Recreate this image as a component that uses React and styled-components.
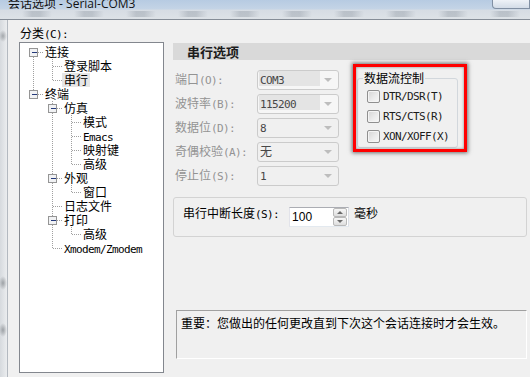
import React from 'react';
import styled, { createGlobalStyle } from 'styled-components';

const GlobalStyle = createGlobalStyle`
  html, body {
    margin: 0;
    padding: 0;
  }
  body {
    width: 530px;
    height: 377px;
    overflow: hidden;
    background: #f0f0f0;
    color: #000;
    font-family: "Noto Sans CJK SC", "Noto Sans CJK JP", sans-serif;
    font-size: 12px;
  }
`;

// SimSun-like half width latin runs
const Ascii = styled.span`
  font-family: "DejaVu Sans Mono", "Liberation Mono", monospace;
  font-size: 11px;
  letter-spacing: -0.62px;
`;

const Window = styled.div`
  width: 530px;
  height: 377px;
  display: flex;
  flex-direction: column;
  overflow: hidden;
`;

const TitleBar = styled.div`
  flex: none;
  height: 19px;
  display: flex;
  justify-content: space-between;
  align-items: flex-start;
  padding-left: 8px;
  overflow: hidden;
  border-bottom: 1px solid #858d97;
  background:
    repeating-linear-gradient(90deg,
      rgba(110, 120, 132, 0) 0px,
      rgba(110, 120, 132, 0) 22px,
      rgba(110, 120, 132, 0.28) 32px,
      rgba(110, 120, 132, 0.28) 40px,
      rgba(110, 120, 132, 0) 52px) 0 11px / 100% 6px no-repeat,
    linear-gradient(to bottom, #b7cbe2 0px, #c4d4e6 9px, #d6dce3 10px, #dde2e7 19px);
`;

const TitleText = styled.span`
  margin-top: -4px;
  line-height: 16px;
  font-family: "Open Sans", "Noto Sans CJK SC", sans-serif;
  font-size: 12px;
  color: #111;
`;

const CaptionButton = styled.span`
  width: 36px;
  height: 8px;
  border: 1px solid #8190a3;
  border-top: none;
  border-radius: 0 0 0 4px;
  background: linear-gradient(to bottom, #eef2f7, #d3dce7);
`;

const Body = styled.div`
  flex: 1;
  display: flex;
  min-height: 0;
`;

const FrameEdge = styled.div`
  flex: none;
  width: 7px;
  border-right: 1px solid #b3b9c0;
  background:
    radial-gradient(ellipse 4px 6px at 3px 16px, rgba(90, 95, 100, 0.45), transparent),
    radial-gradient(ellipse 4px 7px at 3px 263px, rgba(90, 95, 100, 0.5), transparent),
    radial-gradient(ellipse 4px 7px at 3px 310px, rgba(90, 95, 100, 0.5), transparent),
    linear-gradient(90deg, #d6dade, #ebedef);
`;

const Client = styled.div`
  flex: 1;
  display: flex;
  background: #f0f0f0;
`;

const TreeColumn = styled.div`
  flex: none;
  width: 145px;
  padding: 6px 0 0 11px;
  display: flex;
  flex-direction: column;
`;

const CaptionLabel = styled.div`
  height: 14px;
  line-height: 14px;
  margin: 0 0 2px 1px;
`;

const TreeBox = styled.div`
  box-sizing: border-box;
  height: 331px;
  border: 1px solid #83878e;
  background: #fff;
  padding-top: 2px;
`;

const TreeRow = styled.div`
  display: flex;
  height: 14px;
  align-items: center;
`;

const TreeLabel = styled.span`
  display: inline-block;
  height: 14px;
  line-height: 14px;
  white-space: nowrap;
  padding: 0 2px;
  margin-left: -1px;
  background: ${(p) => (p.$selected ? '#e6e6e6' : 'transparent')};
`;

const Panel = styled.div`
  flex: 1;
  min-width: 0;
  display: flex;
  flex-direction: column;
  padding: 23px 3px 0 9px;
`;

const SectionHeader = styled.div`
  height: 17px;
  margin-right: -3px;
  padding-left: 14px;
  background: #d9d9d9;
  line-height: 17px;
  font-size: 13px;
  font-weight: bold;
  color: #1c1c1c;
`;

const FormArea = styled.div`
  display: flex;
  align-items: flex-start;
  margin-top: 10px;
`;

const Fields = styled.div`
  display: grid;
  grid-template-columns: 82px 82px;
  grid-auto-rows: 20px;
  row-gap: 4px;
  align-items: center;
  padding-left: 2px;
`;

const FieldName = styled.span`
  line-height: 14px;
  color: #939393;
  white-space: nowrap;
`;

const Combo = styled.div`
  box-sizing: border-box;
  height: 20px;
  display: flex;
  align-items: flex-start;
  border: 1px solid #cbcbcb;
  border-radius: 3px;
  background: ${(p) => (p.$filled ? '#f6f6f6' : '#f0f0f0')};
  padding-left: 1px;
`;

const ComboValue = styled.span`
  width: ${(p) => (p.$filled ? '60px' : 'auto')};
  height: 15px;
  padding-left: 1px;
  line-height: 16px;
  background: ${(p) => (p.$filled ? '#e4e4e4' : 'transparent')};
  color: #474747;
`;

const ComboArrow = styled.span`
  margin: 7px 6px 0 auto;
  width: 0;
  height: 0;
  border-left: 4px solid transparent;
  border-right: 4px solid transparent;
  border-top: 4px solid #bdbdbd;
`;

const Highlighted = styled.div`
  position: relative;
  margin: 1px 0 0 18px;
`;

const RedMark = styled.div`
  position: absolute;
  left: -4px;
  top: -7px;
  width: 114px;
  height: 88px;
  box-sizing: border-box;
  border: 3px solid #ff0000;
  box-shadow: 0 0 4px 1px rgba(0, 0, 0, 0.55), inset 0 0 3px rgba(0, 0, 0, 0.45);
  pointer-events: none;
`;

const GroupBox = styled.fieldset`
  box-sizing: border-box;
  width: 101px;
  margin: 0;
  padding: 1px 0 1px 5px;
  border: 1px solid #d2d7dc;
  border-radius: 3px;
`;

const GroupTitle = styled.legend`
  padding: 0 1px;
  line-height: 14px;
  font-size: 12px;
`;

const CheckRow = styled.label`
  display: flex;
  align-items: center;
  height: 20px;
  padding-left: 4px;
  color: #1a1a1a;
`;

const CheckBox = styled.span`
  flex: none;
  box-sizing: border-box;
  width: 13px;
  height: 13px;
  border: 1px solid #8f8f8f;
  border-radius: 2px;
  background: linear-gradient(135deg, #d4d4d4 0%, #ebebeb 55%, #f7f7f7 100%);
  box-shadow: inset 0 0 0 1px #f4f4f4;
  margin-right: 3px;
`;

const SpinGroup = styled.div`
  box-sizing: border-box;
  height: 40px;
  margin-top: 11px;
  display: flex;
  align-items: flex-start;
  padding: 8px 0 0 9px;
  border: 1px solid #d3d3d3;
  border-radius: 3px;
`;

const SpinLabel = styled.span`
  line-height: 14px;
  white-space: nowrap;
`;

const SpinField = styled.div`
  box-sizing: border-box;
  width: 60px;
  height: 20px;
  margin: 1px 5px 0 10px;
  display: flex;
  border: 1px solid;
  border-color: #abadb3 #dbdfe6 #e3e9ef #e2e3ea;
  background: #fff;
`;

const SpinValue = styled.span`
  flex: 1;
  padding-left: 2px;
  line-height: 18px;
  font-family: "Liberation Sans", sans-serif;
  font-size: 12px;
`;

const SpinButtons = styled.div`
  width: 14px;
  margin-right: 1px;
  display: flex;
  flex-direction: column;
`;

const SpinButton = styled.span`
  flex: 1;
  display: flex;
  align-items: center;
  justify-content: center;
  box-sizing: border-box;
  border: 1px solid #b9b9b9;
  border-radius: 2px;
  background: linear-gradient(to bottom, #f7f7f7, #dedede);

  &::after {
    content: '';
    width: 0;
    height: 0;
    border-left: 3px solid transparent;
    border-right: 3px solid transparent;
    ${(p) => (p.$down ? 'border-top: 3px solid #6a6a6a;' : 'border-bottom: 3px solid #6a6a6a;')}
  }
`;

const Notice = styled.div`
  box-sizing: border-box;
  height: 49px;
  margin: 73px 0 0 3px;
  padding: 5px 0 0 4px;
  border: 1px solid;
  border-color: #a0a0a0 #ffffff #ffffff #a0a0a0;
  line-height: 14px;
`;

const treeData = [
  {
    label: '连接',
    children: [{ label: '登录脚本' }, { label: '串行', selected: true }],
  },
  {
    label: '终端',
    children: [
      {
        label: '仿真',
        children: [
          { label: '模式' },
          { label: <Ascii>Emacs</Ascii> },
          { label: '映射键' },
          { label: '高级' },
        ],
      },
      { label: '外观', children: [{ label: '窗口' }] },
      { label: '日志文件' },
      { label: '打印', children: [{ label: '高级' }] },
      { label: <Ascii>Xmodem/Zmodem</Ascii> },
    ],
  },
];

function flatten(nodes, depth = 0, guides = [], out = []) {
  nodes.forEach((node, i) => {
    const last = i === nodes.length - 1;
    out.push({
      ...node,
      depth,
      guides,
      last,
      first: depth === 0 && i === 0,
      hasChildren: !!node.children,
    });
    if (node.children) flatten(node.children, depth + 1, [...guides, !last], out);
  });
  return out;
}

const rows = flatten(treeData);
const STEP = 19;

function Connector({ row }) {
  const w = 24 + STEP * row.depth;
  const cx = 13 + STEP * row.depth;
  const dot = { stroke: '#a0a0a0', strokeWidth: 1, strokeDasharray: '1 1' };
  return (
    <svg width={w} height="14" style={{ flex: 'none' }} shapeRendering="crispEdges">
      {row.guides.map((g, a) =>
        g ? <line key={a} x1={13 + STEP * a + 0.5} x2={13 + STEP * a + 0.5} y1="0" y2="14" {...dot} /> : null
      )}
      <line x1={cx + 0.5} x2={cx + 0.5} y1={row.first ? 8 : 0} y2={row.last ? 7 : 14} {...dot} />
      <line x1={cx + (row.hasChildren ? 5 : 1)} x2={cx + 10} y1="7.5" y2="7.5" {...dot} />
      {row.hasChildren && (
        <g>
          <rect x={cx - 3.5} y="3.5" width="8" height="8" fill="#f1f2f4" stroke="#959595" />
          <line x1={cx - 1} x2={cx + 4} y1="7.5" y2="7.5" stroke="#24397a" />
        </g>
      )}
    </svg>
  );
}

const fields = [
  { name: '端口', key: 'O', value: <Ascii>COM3</Ascii>, filled: true },
  { name: '波特率', key: 'B', value: <Ascii>115200</Ascii>, filled: true },
  { name: '数据位', key: 'D', value: <Ascii>8</Ascii> },
  { name: '奇偶校验', key: 'A', value: '无' },
  { name: '停止位', key: 'S', value: <Ascii>1</Ascii> },
];

const flows = [
  ['DTR/DSR', 'T'],
  ['RTS/CTS', 'R'],
  ['XON/XOFF', 'X'],
];

export default function App() {
  return (
    <Window>
      <GlobalStyle />
      <TitleBar>
        <TitleText>会话选项 - Serial-COM3</TitleText>
        <CaptionButton />
      </TitleBar>
      <Body>
        <FrameEdge />
        <Client>
          <TreeColumn>
            <CaptionLabel>
              分类<Ascii>(C):</Ascii>
            </CaptionLabel>
            <TreeBox>
              {rows.map((row, i) => (
                <TreeRow key={i}>
                  <Connector row={row} />
                  <TreeLabel $selected={row.selected}>{row.label}</TreeLabel>
                </TreeRow>
              ))}
            </TreeBox>
          </TreeColumn>

          <Panel>
            <SectionHeader>串行选项</SectionHeader>
            <FormArea>
              <Fields>
                {fields.map((f) => (
                  <React.Fragment key={f.key}>
                    <FieldName>
                      {f.name}
                      <Ascii>({f.key}):</Ascii>
                    </FieldName>
                    <Combo $filled={f.filled}>
                      <ComboValue $filled={f.filled}>{f.value}</ComboValue>
                      <ComboArrow />
                    </Combo>
                  </React.Fragment>
                ))}
              </Fields>
              <Highlighted>
                <GroupBox>
                  <GroupTitle>数据流控制</GroupTitle>
                  {flows.map(([name, key]) => (
                    <CheckRow key={key}>
                      <CheckBox />
                      <Ascii>
                        {name}({key})
                      </Ascii>
                    </CheckRow>
                  ))}
                </GroupBox>
                <RedMark />
              </Highlighted>
            </FormArea>

            <SpinGroup>
              <SpinLabel>
                串行中断长度<Ascii>(S):</Ascii>
              </SpinLabel>
              <SpinField>
                <SpinValue>100</SpinValue>
                <SpinButtons>
                  <SpinButton />
                  <SpinButton $down />
                </SpinButtons>
              </SpinField>
              <SpinLabel>毫秒</SpinLabel>
            </SpinGroup>

            <Notice>重要：您做出的任何更改直到下次这个会话连接时才会生效。</Notice>
          </Panel>
        </Client>
      </Body>
    </Window>
  );
}
